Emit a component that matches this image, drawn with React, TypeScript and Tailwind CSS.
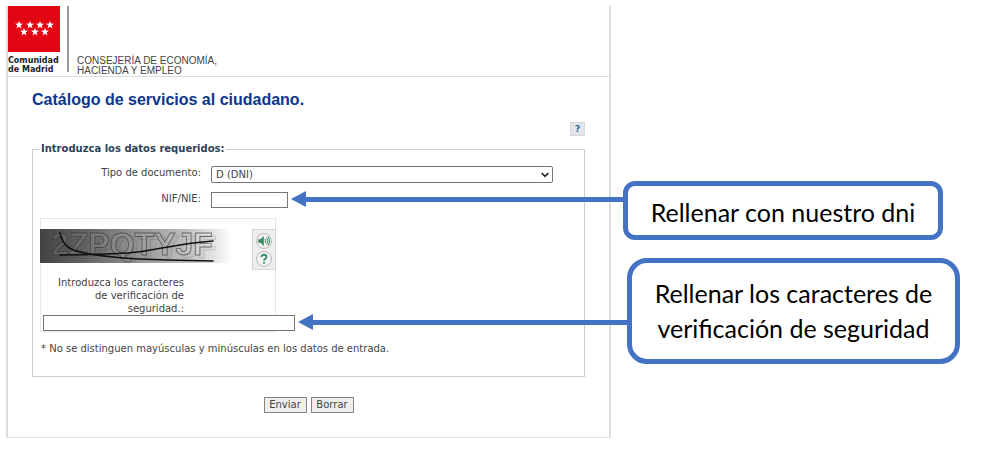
import type { ReactNode } from "react";

const STARS = [
  [12, 19], [23, 19], [33, 19], [43, 19],
  [17, 26], [28, 26], [38, 26],
];

function star(cx: number, cy: number) {
  return Array.from({ length: 10 }, (_, i) => {
    const r = i % 2 === 0 ? 4.2 : 1.7;
    const a = (Math.PI / 5) * i - Math.PI / 2;
    return `${cx - 1 + r * Math.cos(a)},${cy + r * Math.sin(a)}`;
  }).join(" ");
}

function Header() {
  return (
    <header className="flex h-[71px] border-b border-[#dcdcdc]">
      <div className="w-[52px]">
        <svg viewBox="0 0 52 46" className="block h-[46px] w-[52px] bg-[#e30613]" aria-hidden="true">
          {STARS.map(([x, y]) => (
            <polygon key={`${x}-${y}`} points={star(x, y)} fill="#fff" />
          ))}
        </svg>
        <p className="mt-[4px] whitespace-nowrap text-[8px] font-bold leading-[9px] text-[#1c1c1c]">
          Comunidad
          <br />
          de Madrid
        </p>
      </div>
      <div className="ml-[7px] h-[66px] w-[2px] bg-[#969696]" />
      <p className="mt-[50px] ml-2 whitespace-nowrap font-['Liberation_Sans',sans-serif] text-[10px] leading-[10px] text-[#444]">
        CONSEJERÍA DE ECONOMÍA,
        <br />
        HACIENDA Y EMPLEO
      </p>
    </header>
  );
}

function CaptchaImage() {
  return (
    <svg viewBox="0 0 192 34" className="block h-[34px] w-48" role="img" aria-label="Imagen de verificación">
      <defs>
        <linearGradient id="fade">
          <stop offset="0" stopColor="#434343" />
          <stop offset="0.25" stopColor="#666" />
          <stop offset="0.5" stopColor="#929292" />
          <stop offset="0.75" stopColor="#bdbdbd" />
          <stop offset="0.9" stopColor="#e3e3e3" />
          <stop offset="1" stopColor="#fff" />
        </linearGradient>
      </defs>
      <rect width="192" height="34" fill="url(#fade)" />
      <g fontFamily="Liberation Sans, sans-serif" fontWeight="700" fontSize="32" className="drop-shadow-[4px_3px_0_rgba(60,60,60,0.3)]">
        <text x="11" y="26" fill="#fff" fillOpacity="0.08" stroke="#333" strokeOpacity="0.65" strokeWidth="0.8">2ZPQTYJF</text>
      </g>
      <g fill="none" stroke="#111" strokeWidth="1.6" strokeLinecap="round">
        <path d="M20 4C23 17 29 22 50 25C80 30 110 31 173 32" />
        <path d="M20 26C60 25 80 26 105 22C130 18 145 14 173 12" />
      </g>
    </svg>
  );
}

function RoundButton({ label, children }: { label: string; children: ReactNode }) {
  return (
    <button type="button" aria-label={label} className="size-4 rounded-full border border-[#bcbcbc] bg-[#f1f1f1]">
      <svg viewBox="0 0 14 14" className="block size-[14px]" fill="none" stroke="#398c61" aria-hidden="true">
        {children}
      </svg>
    </button>
  );
}

function Captcha() {
  return (
    <div className="mt-[10px] ml-[7px] h-[114px] w-[236px] border border-[#e8e8e8]">
      <div className="-mx-px mt-[10px] flex items-start justify-between">
        <CaptchaImage />
        <div className="flex h-[41px] w-6 flex-col items-center justify-center gap-[2px] border border-[#d5d5d5] bg-[#eee]">
          <RoundButton label="Escuchar los caracteres">
            <path d="M1.5 5.5h2l3-3v9l-3-3h-2z" fill="#398c61" strokeWidth="0.6" />
            <path d="M8 5q1.5 2 0 4M9.700 3.500q2.500 3.500 0 7M11.300 2.500q3 4.500 0 9" strokeWidth="1" />
          </RoundButton>
          <RoundButton label="Ayuda de verificación">
            <path d="M4.500 5c0-3 5-3 5 0 0 1.700-2.500 1.700-2.500 3.700M7 10v1.800" strokeWidth="1.800" />
          </RoundButton>
        </div>
      </div>
      <label htmlFor="captcha" className="mt-[6px] ml-2 block w-[135px] text-right leading-[13px]">
        Introduzca los caracteres de verificación de seguridad.:
      </label>
      <input id="captcha" type="text" className="ml-[2px] block h-4 w-[252px] border border-[#767676] bg-white px-1" />
    </div>
  );
}

function ServiceForm() {
  return (
    <form className="px-6 text-[10px] text-[#444]" onSubmit={(e) => e.preventDefault()}>
      <h1 className="mt-[13px] font-['Liberation_Sans',sans-serif] text-base font-bold leading-5 text-[#0b3692]">
        Catálogo de servicios al ciudadano.
      </h1>
      <div className="mt-3 flex justify-end">
        <button
          type="button"
          aria-label="Ayuda"
          className="h-[14px] w-[15px] border border-[#d5d8dc] bg-[#e3e5e8] text-center text-[9px] font-bold leading-3 text-[#2c6e9e]"
        >
          ?
        </button>
      </div>
      <fieldset className="mt-[6px] h-[235px] border border-[#ccc]">
        <legend className="ml-[7px] px-px text-[10px] font-bold leading-[14px] text-[#2c4256]">
          Introduzca los datos requeridos:
        </legend>
        <div className="mt-[10px] flex items-start">
          <label htmlFor="tipo" className="w-[168px] text-right leading-[14px]">Tipo de documento:</label>
          <div className="relative ml-[10px] w-[342px]">
            <select
              id="tipo"
              className="block h-[17px] w-full appearance-none rounded-[2px] border border-[#767676] bg-white px-1 text-[10px] leading-[14px]"
            >
              <option>D (DNI)</option>
            </select>
            <svg viewBox="0 0 8 6" className="pointer-events-none absolute right-1 top-[6px] h-[6px] w-2" fill="none" stroke="#222" strokeWidth="1.700" aria-hidden="true">
              <path d="M0.700 1L4 4.300L7.300 1" />
            </svg>
          </div>
        </div>
        <div className="mt-[9px] flex items-start">
          <label htmlFor="nif" className="w-[168px] text-right leading-[14px]">NIF/NIE:</label>
          <input id="nif" type="text" className="ml-[10px] block h-4 w-[77px] border border-[#767676] bg-white px-1" />
        </div>
        <Captcha />
        <p className="mt-[10px] ml-2 leading-[14px]">* No se distinguen mayúsculas y minúsculas en los datos de entrada.</p>
      </fieldset>
      <div className="mt-5 mb-6 flex justify-center gap-1">
        <button type="submit" className="h-4 w-[43px] border border-[#858585] bg-[#efefef] leading-[14px]">Enviar</button>
        <button type="reset" className="h-4 w-[43px] border border-[#858585] bg-[#efefef] leading-[14px]">Borrar</button>
      </div>
    </form>
  );
}

function Arrow({ className }: { className: string }) {
  return (
    <div className={`absolute right-full flex items-center ${className}`} aria-hidden="true">
      <span className="border-y-8 border-r-[15px] border-y-transparent border-r-[#4472c4]" />
      <span className="h-[5px] flex-1 bg-[#4472c4]" />
    </div>
  );
}

export default function App() {
  return (
    <div className="flex bg-white pt-[6px] pl-[6px] font-['DejaVu_Sans',sans-serif]">
      <main className="max-w-[605px] min-w-0 flex-1 self-start border-x-2 border-b border-x-[#dcdcdc] border-b-[#e2e2e2]">
        <Header />
        <ServiceForm />
      </main>
      <aside className="flex w-[377px] shrink-0 flex-col items-start gap-[18px] pt-[175px] pl-3 font-['Lato',sans-serif] text-[25px] leading-[35px] text-black">
        <div className="relative w-[320px] rounded-xl border-[5px] border-[#4472c4] bg-white pt-[9px] pb-[5px] text-center">
          <Arrow className="top-[5px] w-[337px]" />
          <p>Rellenar con nuestro dni</p>
        </div>
        <div className="relative ml-1 w-[333px] rounded-[20px] border-[5px] border-[#4472c4] bg-white px-4 py-[13px] text-center">
          <Arrow className="top-[51px] w-[334px]" />
          <p>Rellenar los caracteres de verificación de seguridad</p>
        </div>
      </aside>
    </div>
  );
}
